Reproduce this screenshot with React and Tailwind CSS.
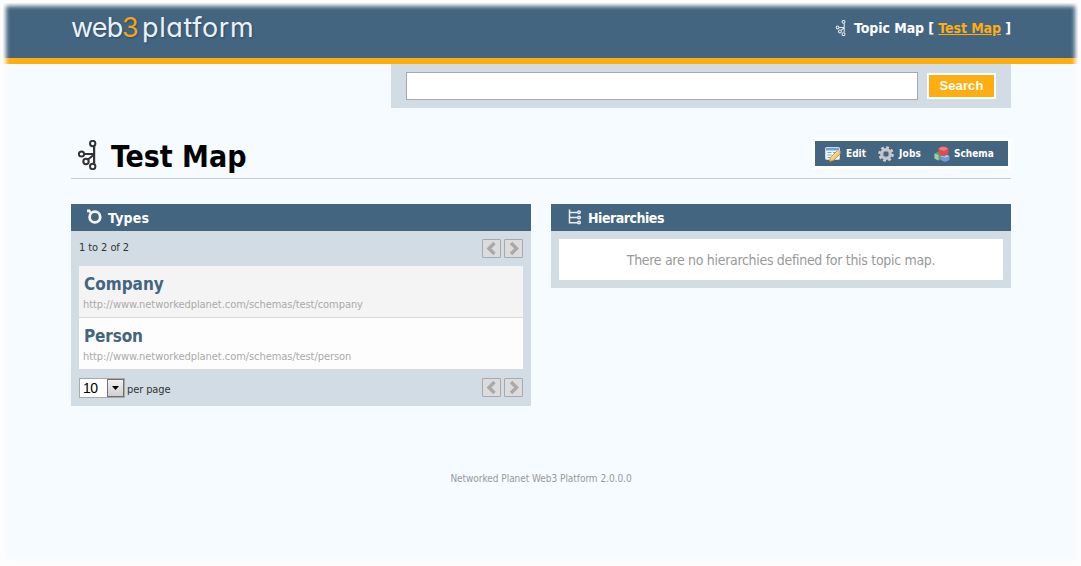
import React from "react";

function TopicMapIcon({ className, stroke }) {
  return (
    <svg className={className} viewBox="0 0 20 30" fill="none" stroke={stroke} strokeWidth="2">
      <path d="M17.500 4v22" stroke="#999999" strokeOpacity="0.450" strokeWidth="1" />
      <path d="M16 6v17M6.500 14H16M10 19.500l6-5" />
      <circle cx="14.700" cy="3.500" r="2.700" />
      <circle cx="3.500" cy="14" r="2.600" />
      <circle cx="8" cy="21.500" r="2.700" />
      <circle cx="14.700" cy="26.500" r="2.700" />
    </svg>
  );
}

function TypesIcon() {
  return (
    <svg className="h-4 w-4" viewBox="0 0 16 16" fill="none" stroke="#f3f6f8">
      <circle cx="7.900" cy="8" r="5.300" strokeWidth="2.800" />
      <path d="M0.300 0.800l4.500 3.500M0.300 3l3-2" strokeWidth="1.800" />
    </svg>
  );
}

function HierarchyIcon() {
  return (
    <svg className="h-4 w-4" viewBox="0 0 16 16" fill="none" stroke="#e8eef3" strokeWidth="1.500">
      <path d="M2.500 0.500v14M2.500 3.500h8M2.500 8.500h8M2.500 13.700h8" />
      <circle cx="12" cy="3.300" r="1.300" />
      <circle cx="12" cy="8.500" r="1.300" />
      <circle cx="12" cy="13.500" r="1.300" />
    </svg>
  );
}

function EditIcon() {
  return (
    <svg className="h-4 w-4" viewBox="0 0 16 16">
      <rect x="0.500" y="1.500" width="14" height="12" rx="1" fill="#f2f7fd" stroke="#c4d8f0" />
      <path d="M1 2h13v2.500H1z" fill="#6f9fdf" />
      <path d="M2.500 6.500h4M8 6.500h5M2.500 9h4M2.500 11.500h4" stroke="#7ca5d5" />
      <path d="M4.500 15.500l1-4L12.500 4.500l3 3-7 7z" fill="#f5cc62" stroke="#b88733" strokeWidth="0.800" />
      <path d="M12 5l1.500-1.500 2.500 2.500-1.500 1.500z" fill="#e9b498" />
      <path d="M6 12.500l7-7" stroke="#fff0a8" />
    </svg>
  );
}

function JobsIcon() {
  return (
    <svg className="h-4 w-4" viewBox="0 0 16 16" fill="none">
      <circle cx="8" cy="8" r="6.600" stroke="#d0d0d0" strokeWidth="2.400" strokeDasharray="2.800 2.384" />
      <circle cx="8" cy="8" r="4.300" stroke="#c8c8c8" strokeWidth="3.200" />
      <circle cx="8" cy="8" r="3" stroke="#979ba0" strokeWidth="0.800" />
    </svg>
  );
}

function SchemaIcon() {
  return (
    <svg className="h-4 w-4" viewBox="0 0 16 16">
      <path d="M0.500 7.500l4-2 3.500 2v5l-3.500 2-4-2z" fill="#5e9e72" />
      <path d="M0.500 7.500l4 1.500v5.500l-4-2z" fill="#9bd1a4" />
      <path d="M6.500 10l4.500-1.500 4.500 1.500v4L11 16l-4.500-2z" fill="#6b9bd3" />
      <path d="M6.500 10l4.500 1.500 4.500-1.500-4.500-1.500z" fill="#b7d3f3" />
      <path d="M4 3l3-2.500h5L14.500 3v4.500L10.500 10.500 5.500 9z" fill="#dc4c50" />
      <path d="M4.500 3l5 2L14 3l-3-2H7z" fill="#ee7c7a" />
    </svg>
  );
}

function PagerButton({ direction }) {
  return (
    <button className="flex h-[19px] w-[19px] items-center justify-center rounded-[1px] border border-[#a9a9a9] bg-[#dcdcdc]">
      <svg className="h-[17px] w-[17px]" viewBox="0 0 17 17" fill="none" stroke="#a9a9a9" strokeWidth="3.400">
        <path d={direction === "prev" ? "M11.500 3l-5.500 5.500 5.500 5.500" : "M6 3l5.500 5.500L6 14"} />
      </svg>
    </button>
  );
}

function Pager() {
  return (
    <div className="flex gap-[3px]">
      <PagerButton direction="prev" />
      <PagerButton direction="next" />
    </div>
  );
}

function PanelHeader({ icon, title, spacing }) {
  return (
    <h2 className="flex h-[27px] items-center bg-[#44657f] pl-4 text-[14px] font-bold text-white">
      <span className="-mt-[2px] mr-[5px]">{icon}</span>
      <span className={"pt-px " + spacing}>{title}</span>
    </h2>
  );
}

function TypeRow({ name, url, className, nameSpacing }) {
  return (
    <li className={"h-[52px] border-b border-[#d9d9d9] pt-[8px] " + className}>
      <a className={"block pl-[5px] text-[17px] leading-[20px] font-bold text-[#44657f] " + nameSpacing}>{name}</a>
      <div className="mt-px pl-[4px] text-[11px] leading-[20px] tracking-[-0.06px] text-[#aaaaaa]">{url}</div>
    </li>
  );
}

export default function App() {
  return (
    <div className="relative h-[566px] w-[1081px] overflow-hidden bg-[#fdfdfe] px-[3px] pt-[3px] whitespace-nowrap [font-family:'DejaVu_Sans_Condensed','DejaVu_Sans',sans-serif] [font-stretch:condensed]">
      <div className="h-[560px] bg-[#f5fbff]">
        <header className="h-[61px] border-b-[6px] border-[#ffad11] bg-[#44657f]">
          <div className="ml-[68px] flex w-[940px] justify-between">
            <div className="mt-[8px] flex text-[27px] leading-[34px] font-normal text-[#e9f2fa] [font-family:Inter,sans-serif] [font-feature-settings:'cv11'] [text-shadow:1px_1px_2px_#2d4c65]">
              <span className="w-[51px] tracking-[-0.8px]">web</span>
              <span className="w-[20px] font-normal text-[#f5a31c]">3</span>
              <span className="tracking-[0.6px]">platform</span>
            </div>
            <div className="mt-[15px] flex h-5 items-center text-[14px] font-bold text-white">
              <TopicMapIcon className="mr-[7px] h-[16px] w-[12px]" stroke="#dfe7ed" />
              <span className="tracking-[-0.07px]">Topic Map [ <a className="text-[#ffad11] underline">Test Map</a> ]</span>
            </div>
          </div>
        </header>

        <main className="ml-[68px] w-[940px]">
          <form className="ml-auto flex h-[44px] w-[620px] items-start bg-[#d2dce4] pt-2 pl-[15px]">
            <input className="h-[28px] w-[512px] border border-[#a9a9a9] bg-white px-2" />
            <button type="button" className="mt-px ml-[9px] h-[26px] w-[69px] border-2 border-white bg-[#ffad11] text-[13px] leading-[22px] font-bold tracking-[0.1px] text-white [font-family:'Liberation_Sans',sans-serif]">
              Search
            </button>
          </form>

          <div className="mt-[30px] flex h-[41px] items-start justify-between border-b border-[#c8cacc]">
            <h1 className="flex items-center text-[30px] leading-[36px] font-bold text-black">
              <TopicMapIcon className="-mt-[3px] mr-[13px] ml-[7px] h-[30px] w-[20px]" stroke="#343434" />
              <span className="mt-px">Test Map</span>
            </h1>
            <nav className="flex h-[31px] w-[199px] items-center border-[3px] border-white bg-[#44657f] pl-[10px] text-[10px] font-bold text-white">
              <EditIcon />
              <span className="ml-[5px] w-[32px]">Edit</span>
              <JobsIcon />
              <span className="ml-[5px] w-[35px] tracking-[0.2px]">Jobs</span>
              <SchemaIcon />
              <span className="ml-[4px]">Schema</span>
            </nav>
          </div>

          <div className="mt-[25px] grid grid-cols-2 items-start gap-5">
            <section className="h-[202px] bg-[#d2dce4]">
              <PanelHeader icon={<TypesIcon />} title="Types" spacing="tracking-[0.2px]" />
              <div className="px-2">
                <div className="flex h-[35px] items-start justify-between pt-2 text-[11px] text-[#333333]">
                  <span className="pt-px leading-[16px] tracking-[-0.08px]">1 to 2 of 2</span>
                  <Pager />
                </div>
                <ul>
                  <TypeRow name="Company" url="http://www.networkedplanet.com/schemas/test/company" className="bg-[#f4f4f4]" nameSpacing="" />
                  <TypeRow name="Person" url="http://www.networkedplanet.com/schemas/test/person" className="bg-[#fdfdfd]" nameSpacing="tracking-[-0.15px]" />
                </ul>
                <div className="flex items-start justify-between pt-2 text-[11px] text-[#333333]">
                  <div className="flex items-center">
                    <div className="mr-[2px] flex h-[20px] w-[46px] items-stretch border border-[#a9a9a9] bg-white">
                      <span className="w-[27px] pl-[3px] text-[14px] leading-[18px] tracking-[-0.5px] text-black [font-family:'Liberation_Sans',sans-serif]">10</span>
                      <span className="flex w-[17px] items-center justify-center border border-[#707070] bg-linear-to-b from-[#f2f2f2] to-[#cfcfcf]">
                        <svg className="h-[4px] w-[7px]" viewBox="0 0 7 4"><path d="M0 0h7L3.500 4z" fill="#000" /></svg>
                      </span>
                    </div>
                    <span className="pt-[4px] tracking-[-0.1px]">per page</span>
                  </div>
                  <Pager />
                </div>
              </div>
            </section>

            <section className="bg-[#d2dce4] pb-2">
              <PanelHeader icon={<HierarchyIcon />} title="Hierarchies" spacing="tracking-[-0.47px]" />
              <p className="mx-2 mt-2 h-[41px] bg-white text-center text-[14px] leading-[42px] tracking-[-0.31px] text-[#999999]">
                There are no hierarchies defined for this topic map.
              </p>
            </section>
          </div>

          <footer className="mt-[65px] text-center text-[10px] leading-[15px] tracking-[-0.04px] text-[#999999]">Networked Planet Web3 Platform 2.0.0.0</footer>
        </main>
      </div>
      <div className="pointer-events-none absolute inset-0 shadow-[inset_0_0_4px_6px_#fdfdfe]" />
    </div>
  );
}
